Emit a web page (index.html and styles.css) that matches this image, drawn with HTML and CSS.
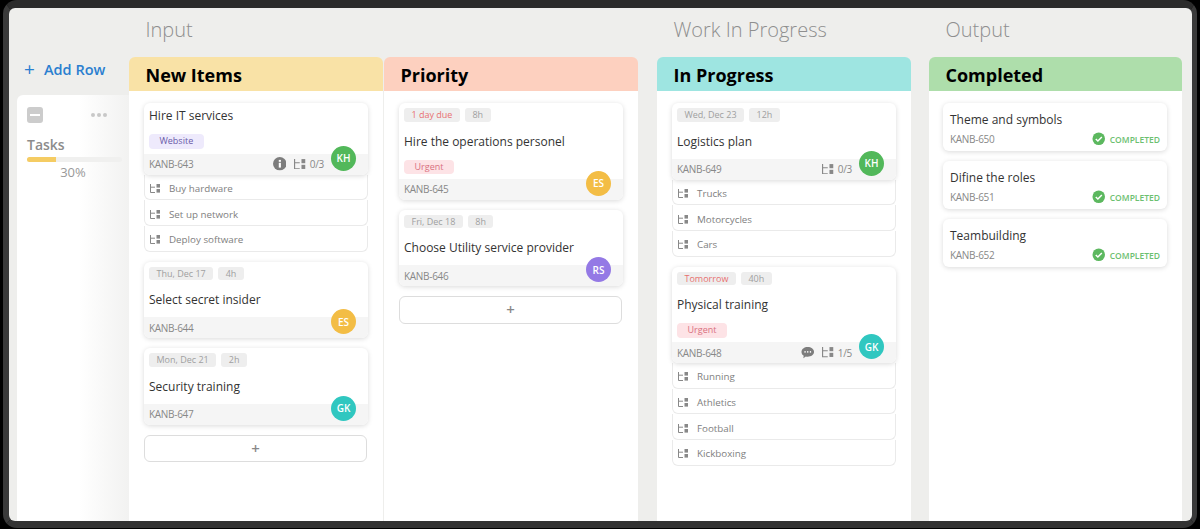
FILE: index.html
```html
<!DOCTYPE html>
<html lang="en">
<head>
  <meta charset="UTF-8">
  <meta name="viewport" content="width=device-width, initial-scale=1.0">
  <title>Kanban Board</title>
  <link rel="stylesheet" href="styles.css">
</head>
<body>
  <svg class="sprite">
    <symbol id="i-sub" viewBox="0 0 10 9">
      <path d="M0.5 0V8.5H5M0.5 3.2H5" fill="none" stroke="currentColor" stroke-width="1"/>
      <rect x="6.5" y="0" width="3.5" height="3.6"/>
      <rect x="6.5" y="5" width="3.5" height="3.6"/>
    </symbol>
    <symbol id="i-check" viewBox="0 0 14 14">
      <circle cx="7" cy="7" r="6.5" fill="#5cb85f"/>
      <path d="M3.9 7.2L6.1 9.3L10.2 5.1" fill="none" stroke="#fff" stroke-width="1.5"/>
    </symbol>
    <symbol id="i-info" viewBox="0 0 14 14">
      <circle cx="7" cy="7" r="7" fill="#7d7d7d"/>
      <rect x="6" y="6" width="2.2" height="5" fill="#fff"/>
      <rect x="6" y="3" width="2.2" height="2" fill="#fff"/>
    </symbol>
    <symbol id="i-comment" viewBox="0 0 14 13">
      <path d="M7 0.5C10.6 0.5 13.5 2.6 13.5 5.6C13.5 8.6 10.6 10.6 7 10.6C6.3 10.6 5.6 10.5 5 10.4L2.4 12.3L2.8 9.5C1.3 8.6 0.5 7.2 0.5 5.6C0.5 2.6 3.4 0.5 7 0.5Z" fill="#7d7d7d"/>
      <circle cx="4.2" cy="5.6" r="0.8" fill="#fff"/>
      <circle cx="7" cy="5.6" r="0.8" fill="#fff"/>
      <circle cx="9.8" cy="5.6" r="0.8" fill="#fff"/>
    </symbol>
  </svg>

  <div class="frame">
    <div class="app">

      <aside class="side">
        <div class="add-row"><span class="add-plus">+</span> Add Row</div>
        <div class="lane">
          <div class="lane-top">
            <span class="collapse"></span>
            <span class="dots"><i></i><i></i><i></i></span>
          </div>
          <div class="lane-name">Tasks</div>
          <div class="bar"><div class="bar-fill" style="width: 30%"></div></div>
          <div class="bar-pct">30%</div>
        </div>
      </aside>

      <section class="group group-input">
        <h2>Input</h2>
        <div class="cols">
          <div class="col">
            <h3 class="col-head yellow">New Items</h3>
            <div class="col-body">
              <div class="task">
                <div class="card">
                  <div class="body nodate">
                    <div class="title">Hire IT services</div>
                    <div class="label purple">Website</div>
                  </div>
                  <div class="foot">
                    <span class="id">KANB-643</span>
                    <svg class="meta-icon"><use href="#i-info"/></svg>
                    <span class="subcount"><svg class="sub-icon"><use href="#i-sub"/></svg>0/3</span>
                  </div>
                  <span class="avatar green">KH</span>
                </div>
                <div class="sub"><svg class="sub-icon"><use href="#i-sub"/></svg>Buy hardware</div>
                <div class="sub"><svg class="sub-icon"><use href="#i-sub"/></svg>Set up network</div>
                <div class="sub"><svg class="sub-icon"><use href="#i-sub"/></svg>Deploy software</div>
              </div>
              <div class="task">
                <div class="card">
                  <div class="body">
                    <div class="tags"><span class="tag">Thu, Dec 17</span><span class="tag">4h</span></div>
                    <div class="title">Select secret insider</div>
                  </div>
                  <div class="foot"><span class="id">KANB-644</span></div>
                  <span class="avatar amber">ES</span>
                </div>
              </div>
              <div class="task">
                <div class="card">
                  <div class="body">
                    <div class="tags"><span class="tag">Mon, Dec 21</span><span class="tag">2h</span></div>
                    <div class="title">Security training</div>
                  </div>
                  <div class="foot"><span class="id">KANB-647</span></div>
                  <span class="avatar teal">GK</span>
                </div>
              </div>
              <div class="add-card">+</div>
            </div>
          </div>

          <div class="col">
            <h3 class="col-head salmon">Priority</h3>
            <div class="col-body">
              <div class="task">
                <div class="card">
                  <div class="body">
                    <div class="tags"><span class="tag red">1 day due</span><span class="tag">8h</span></div>
                    <div class="title">Hire the operations personel</div>
                    <div class="label pink">Urgent</div>
                  </div>
                  <div class="foot"><span class="id">KANB-645</span></div>
                  <span class="avatar amber">ES</span>
                </div>
              </div>
              <div class="task">
                <div class="card">
                  <div class="body">
                    <div class="tags"><span class="tag">Fri, Dec 18</span><span class="tag">8h</span></div>
                    <div class="title">Choose Utility service provider</div>
                  </div>
                  <div class="foot"><span class="id">KANB-646</span></div>
                  <span class="avatar violet">RS</span>
                </div>
              </div>
              <div class="add-card">+</div>
            </div>
          </div>
        </div>
      </section>

      <section class="group group-work">
        <h2>Work In Progress</h2>
        <div class="cols">
          <div class="col">
            <h3 class="col-head aqua">In Progress</h3>
            <div class="col-body">
              <div class="task">
                <div class="card">
                  <div class="body">
                    <div class="tags"><span class="tag">Wed, Dec 23</span><span class="tag">12h</span></div>
                    <div class="title">Logistics plan</div>
                  </div>
                  <div class="foot">
                    <span class="id">KANB-649</span>
                    <span class="subcount"><svg class="sub-icon"><use href="#i-sub"/></svg>0/3</span>
                  </div>
                  <span class="avatar green">KH</span>
                </div>
                <div class="sub"><svg class="sub-icon"><use href="#i-sub"/></svg>Trucks</div>
                <div class="sub"><svg class="sub-icon"><use href="#i-sub"/></svg>Motorcycles</div>
                <div class="sub"><svg class="sub-icon"><use href="#i-sub"/></svg>Cars</div>
              </div>
              <div class="task">
                <div class="card">
                  <div class="body">
                    <div class="tags"><span class="tag red">Tomorrow</span><span class="tag">40h</span></div>
                    <div class="title">Physical training</div>
                    <div class="label pink">Urgent</div>
                  </div>
                  <div class="foot">
                    <span class="id">KANB-648</span>
                    <svg class="meta-icon"><use href="#i-comment"/></svg>
                    <span class="subcount"><svg class="sub-icon"><use href="#i-sub"/></svg>1/5</span>
                  </div>
                  <span class="avatar teal">GK</span>
                </div>
                <div class="sub"><svg class="sub-icon"><use href="#i-sub"/></svg>Running</div>
                <div class="sub"><svg class="sub-icon"><use href="#i-sub"/></svg>Athletics</div>
                <div class="sub"><svg class="sub-icon"><use href="#i-sub"/></svg>Football</div>
                <div class="sub"><svg class="sub-icon"><use href="#i-sub"/></svg>Kickboxing</div>
              </div>
            </div>
          </div>
        </div>
      </section>

      <section class="group group-output">
        <h2>Output</h2>
        <div class="cols">
          <div class="col">
            <h3 class="col-head mint">Completed</h3>
            <div class="col-body">
              <div class="done-card">
                <div class="title">Theme and symbols</div>
                <div class="done-row"><span class="id">KANB-650</span><span class="status"><svg class="check"><use href="#i-check"/></svg>COMPLETED</span></div>
              </div>
              <div class="done-card">
                <div class="title">Difine the roles</div>
                <div class="done-row"><span class="id">KANB-651</span><span class="status"><svg class="check"><use href="#i-check"/></svg>COMPLETED</span></div>
              </div>
              <div class="done-card">
                <div class="title">Teambuilding</div>
                <div class="done-row"><span class="id">KANB-652</span><span class="status"><svg class="check"><use href="#i-check"/></svg>COMPLETED</span></div>
              </div>
            </div>
          </div>
        </div>
      </section>

    </div>
  </div>
</body>
</html>
```

FILE: styles.css
```css
/* Global Styling */
* {
  box-sizing: border-box;
}

body {
  margin: 0;
  background-color: #000;
  font-family: 'Open Sans', 'Liberation Sans', sans-serif;
  color: #333;
  overflow: hidden;
}

.sprite {
  display: none;
}

/* Window frame */
.frame {
  width: 1194px;
  height: 528px;
  margin: 0 3px;
  border-style: solid;
  border-color: #2b2b2b #3a3a3a #333 #3a3a3a;
  border-width: 8px 5px 7px 6px;
  border-radius: 14px;
}

.app {
  display: flex;
  height: 513px;
  padding-right: 10px;
  background-color: #eeeeec;
  border-radius: 6px;
  overflow: hidden;
}

/* Left swimlane column */
.side {
  display: flex;
  flex-direction: column;
  flex: 0 0 120px;
  padding-top: 49px;
}

.add-row {
  display: flex;
  align-items: center;
  height: 24px;
  margin-bottom: 14px;
  padding-left: 15px;
  font-size: 14.5px;
  font-weight: 600;
  color: #2a7fd0;
}

.add-plus {
  width: 20px;
  font-size: 19px;
  font-weight: 400;
}

.lane {
  flex: 1;
  margin-left: 8px;
  padding: 12px 0 0 10px;
  background: linear-gradient(to right, #fff 55%, #f2f2f1);
  border-radius: 6px 0 0 0;
}

.lane-top {
  display: flex;
  justify-content: space-between;
  align-items: center;
  padding-right: 22px;
}

.collapse {
  display: flex;
  align-items: center;
  justify-content: center;
  width: 16px;
  height: 16px;
  background-color: #ccc;
  border-radius: 3px;
}

.collapse::after {
  content: "";
  width: 10px;
  height: 2px;
  background-color: #fff;
}

.dots {
  display: flex;
  gap: 2px;
}

.dots i {
  width: 4px;
  height: 4px;
  background-color: #c8c8c8;
  border-radius: 50%;
}

.lane-name {
  margin-top: 12px;
  font-size: 14px;
  font-weight: 600;
  line-height: 20px;
  color: #8c8c8c;
}

.bar {
  height: 5px;
  margin-top: 2px;
  margin-right: 7px;
  background-color: #f0f0ef;
  border-radius: 3px;
}

.bar-fill {
  height: 100%;
  background-color: #f5cc63;
  border-radius: 3px 0 0 3px;
}

.bar-pct {
  margin-top: 1px;
  padding-right: 10px;
  font-size: 13px;
  line-height: 19px;
  text-align: center;
  color: #999;
}

/* Groups and columns */
.group {
  display: flex;
  flex-direction: column;
}

.group h2 {
  height: 49px;
  margin: 0;
  padding: 8px 0 0 16.5px;
  font-size: 20px;
  font-weight: 300;
  line-height: 27px;
  color: #8f8f8f;
}

.group-input {
  width: 509px;
}

.group-work {
  width: 254px;
  margin-left: 19px;
}

.group-output {
  width: 253px;
  margin-left: 18px;
}

.cols {
  display: flex;
  flex: 1;
  gap: 1px;
}

.col {
  display: flex;
  flex-direction: column;
  flex: 1;
  min-width: 0;
}

.col-head {
  height: 34px;
  margin: 0;
  padding: 1px 0 0 16.5px;
  font-size: 18px;
  font-weight: 700;
  line-height: 34px;
  color: #000;
  border-radius: 6px 6px 0 0;
}

.yellow { background-color: #f9e2a6; }
.salmon { background-color: #fdd0bf; }
.aqua { background-color: #9ee5e1; }
.mint { background-color: #aedeab; }

.col-body {
  display: flex;
  flex-direction: column;
  flex: 1;
  gap: 10px;
  padding: 12px 15px 0;
  background-color: #fff;
}

.group-output .col-body {
  padding-left: 14px;
}

/* Cards */
.task {
  border-radius: 6px;
}

.card {
  position: relative;
  background-color: #fff;
  border-radius: 6px;
  box-shadow: 0 1px 5px rgba(0, 0, 0, 0.15);
}

.body {
  padding: 5px 5px 4.5px;
  min-height: 55.5px;
}

.body.nodate {
  min-height: 50.5px;
  padding-top: 4px;
}

.tags {
  display: flex;
  gap: 5px;
  margin-bottom: 11px;
}

.tag {
  height: 13.5px;
  padding: 0 7.5px;
  font-size: 9px;
  font-weight: 500;
  line-height: 13.5px;
  color: #a0a0a0;
  background-color: #eee;
  border-radius: 3px;
}

.tag.red {
  color: #e87070;
}

.title {
  font-size: 12px;
  line-height: 17px;
  color: #333;
}

.label {
  width: fit-content;
  height: 14.5px;
  margin-top: 10px;
  padding: 0 10.5px;
  font-size: 9px;
  font-weight: 500;
  line-height: 14.5px;
  border-radius: 4px;
}

.purple {
  color: #6a5aa8;
  background-color: #eeeafc;
}

.pink {
  color: #d9707f;
  background-color: #fde3e6;
}

.foot {
  display: flex;
  align-items: center;
  height: 21px;
  padding: 0 44px 0 5px;
  background-color: #f5f5f5;
  border-radius: 0 0 6px 6px;
}

.id {
  margin-right: auto;
  font-size: 10px;
  letter-spacing: -0.3px;
  color: #888;
}

.meta-icon {
  width: 13.5px;
  height: 13.5px;
  margin-right: 8px;
}

.subcount {
  display: flex;
  align-items: center;
  font-size: 10px;
  letter-spacing: -0.3px;
  color: #888;
}

.sub-icon {
  width: 10px;
  height: 9px;
  color: #888;
  fill: #888;
}

.subcount .sub-icon {
  width: 11.5px;
  height: 10.5px;
  margin-right: 4px;
}

.avatar {
  position: absolute;
  right: 12px;
  bottom: 4px;
  display: flex;
  align-items: center;
  justify-content: center;
  width: 25px;
  height: 25px;
  font-size: 10px;
  font-weight: 600;
  color: #fff;
  border-radius: 50%;
}

.green { background-color: #52b85a; }
.amber { background-color: #f3bd45; }
.teal { background-color: #30c7c0; }
.violet { background-color: #9479e5; }

.sub {
  display: flex;
  align-items: center;
  height: 25.7px;
  padding: 3px 0 0 5px;
  font-size: 9.8px;
  color: #808080;
  background-color: #fff;
  border: 1px solid #eaeaea;
  border-top: none;
  border-radius: 0 0 6px 6px;
}

.sub .sub-icon {
  margin-right: 9px;
}

.add-card {
  height: 27.5px;
  margin-right: 1px;
  font-size: 15px;
  font-weight: 600;
  line-height: 25px;
  text-align: center;
  color: #888;
  border: 1px solid #ddd;
  border-radius: 6px;
}

/* Completed cards */
.done-card {
  height: 48px;
  padding: 8px 7px 0;
  border-radius: 6px;
  box-shadow: 0 1px 5px rgba(0, 0, 0, 0.15);
}

.done-row {
  display: flex;
  align-items: center;
  margin-top: 4px;
}

.status {
  display: flex;
  align-items: center;
  font-size: 8.5px;
  font-weight: 600;
  color: #6cc070;
}

.check {
  width: 13.5px;
  height: 13.5px;
  margin-right: 4px;
}
```
